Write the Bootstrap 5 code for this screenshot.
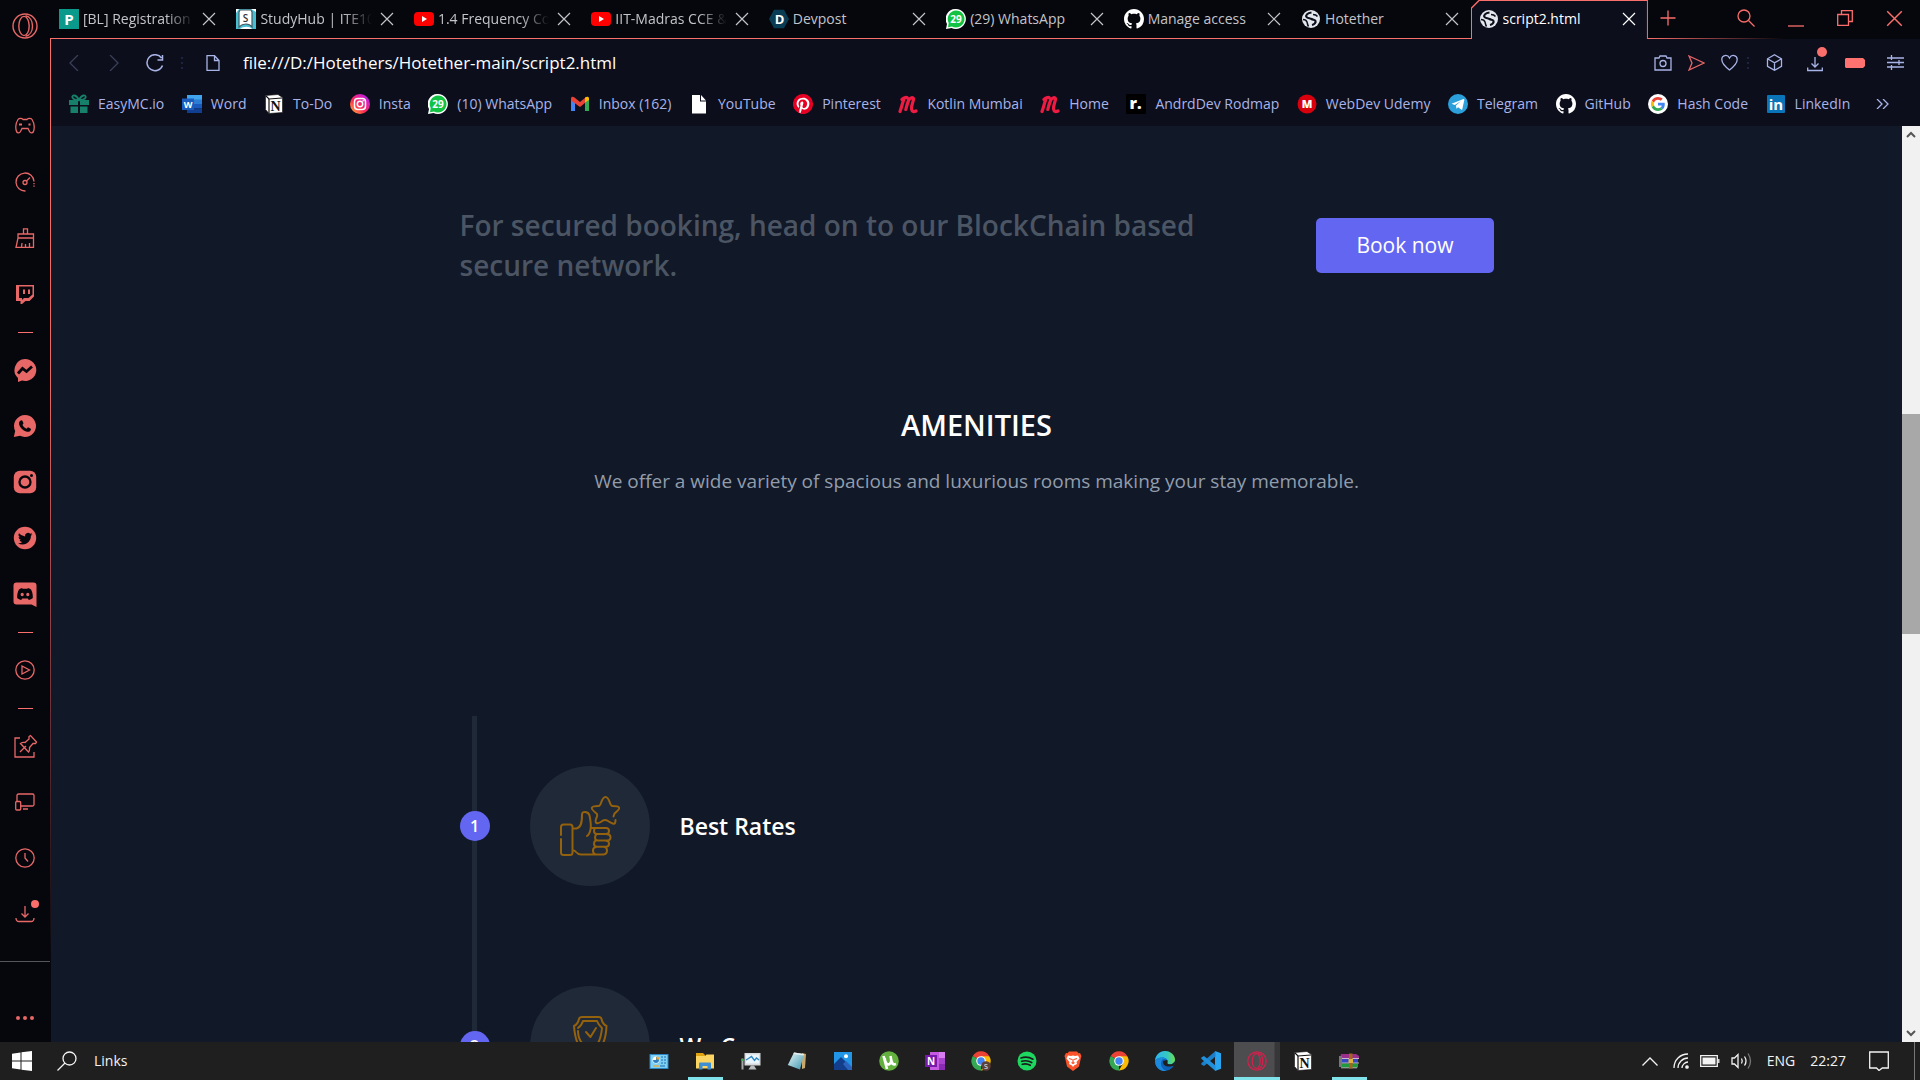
<!DOCTYPE html>
<html lang="en">
<head>
<meta charset="utf-8">
<meta name="viewport" content="width=device-width, initial-scale=1">
<title>script2.html</title>
<link href="https://cdn.jsdelivr.net/npm/bootstrap@5.3.0/dist/css/bootstrap.min.css" rel="stylesheet">
<style>
  :root { --gx: #fa6e6b; --gx-dim: #e86767; --chrome: #0c0e1c; --night: #06070c; --page: #111827; --slate: #1f2937; --indigo: #6366f1; --lilac: #a9b4e6; }
  body { font-family: "Open Sans", "Noto Sans", sans-serif; font-size: 14px; line-height: 20px; background: var(--night); color: #fff; }
  svg { display: block; flex: none; }
  button { background: none; border: 0; padding: 0; color: inherit; }
  a { color: inherit; text-decoration: none; }
  .line-ic { fill: none; stroke: currentColor; stroke-width: 1.3; }
  .i20 { width: 20px; height: 20px; }
  .i24 { width: 24px; height: 24px; }

  /* side rail */
  .rail { width: 50px; color: var(--gx-dim); }
  .rail-logo { height: 98px; padding-top: 13px; }
  .rail-slot { height: 56px; }
  .rail-dash { height: 20px; }
  .rail-dash span { width: 15px; height: 1px; background: var(--gx); }
  .rail-end { height: 81px; border-top: 1px solid #55565c; }
  .rail-edge { width: 1px; margin-top: 38px; background: linear-gradient(var(--gx), var(--gx-dim) 35%, #8a3d45 60%, var(--night) 92%); }
  .dl-dot { position: absolute; width: 8px; height: 8px; border-radius: 50%; background: var(--gx); top: -4px; right: -4px; }
  .dl-dot-lg { width: 10px; height: 10px; top: -7px; }

  /* tab strip */
  .strip { height: 39px; }
  .tab-item { flex: 1 1 0; min-width: 0; height: 39px; padding: 0 12px 0 8px; color: #c3c4c9; border-bottom: 1px solid var(--gx); }
  .tab-name { margin-left: 4px; overflow: hidden; }
  .fade-end { -webkit-mask-image: linear-gradient(90deg, #000 75%, transparent); mask-image: linear-gradient(90deg, #000 75%, transparent); }
  .tab-on { position: relative; z-index: 0; color: #fff; border: 0; padding-bottom: 1px; }
  .tab-on::before, .tab-on::after { content: ""; position: absolute; z-index: -1; inset: 0; background: var(--gx); clip-path: polygon(0 8px, 8px 0, 100% 0, 100% 100%, 0 100%); }
  .tab-on::after { inset: 1px 1px 0 1px; background: var(--chrome); }
  .strip-tools { width: 272px; padding: 0 17px 2px 12px; color: var(--gx); border-bottom: 1px solid; border-image: linear-gradient(90deg, var(--gx), transparent 50%) 1; }
  .win-tools { gap: 33px; }

  /* address row and bookmarks */
  .bars { background: var(--chrome); color: var(--lilac); }
  .addr { height: 48px; padding: 0 16px 1px 15px; }
  .addr-url { background: none; border: 0; outline: 0; color: #fff; font-size: 17px; line-height: 24px; height: 24px; padding: 0; margin-left: 23px; }
  .gap-l { margin-left: 24px; }
  .gap-m { margin-left: 22px; }
  .dim { color: #3a3f58; }
  .marks { height: 39px; padding: 0 31px 6px 18px; }
  .marks a { gap: 9px; white-space: nowrap; }

  /* page */
  .view { background: var(--page); }
  .wrap { width: 100%; max-width: 1034px; }
  .cta-row { padding-top: 79px; }
  .cta-text { font-size: 28px; line-height: 40px; font-weight: 600; color: #4b5563; max-width: 774px; }
  .cta-btn { background: var(--indigo); color: #fff; font-size: 21px; line-height: 35px; padding: 10px 40px; border-radius: 5px; border: 0; }
  .cta-btn:hover { background: #5457e0; color: #fff; }
  .am-title { font-size: 29px; line-height: 40px; font-weight: 600; margin-top: 120px; }
  .am-sub { font-size: 19px; line-height: 32px; color: #929dac; margin-top: 20px; }
  .steps { margin-top: 219px; }
  .step { height: 220px; }
  .step-track { width: 30px; background: linear-gradient(var(--slate), var(--slate)) 12px 0 / 5px 100% no-repeat; }
  .step-num { width: 30px; height: 30px; background: var(--indigo); font-size: 16px; font-weight: 600; }
  .step-disc { width: 120px; height: 120px; margin-left: 40px; background: var(--slate); color: #94610c; }
  .step-name { font-size: 23px; line-height: 32px; font-weight: 600; margin: 0 0 0 30px; }
  .scroller { width: 18px; background: #f1f1f1; color: #555; padding: 5px 0; }
  .scroll-up { flex: 275 0 0; }
  .scroll-thumb { flex: 220 0 0; background: #a8a8a8; }
  .scroll-rest { flex: 395 0 0; }

  /* taskbar */
  .dock { height: 38px; background: #1f1f1f; color: #f3f3f3; }
  .dock-left { width: 636px; padding-left: 12px; }
  .dock-find { margin: 0 17px 0 25px; }
  .dock-app { width: 46px; height: 38px; }
  .dock-open { background: linear-gradient(#80e3ea, #80e3ea) center bottom / 35px 3px no-repeat; }
  .dock-now { color: #d3204c; background: linear-gradient(#80e3ea, #80e3ea) left bottom / 100% 3px no-repeat, linear-gradient(90deg, #4d4d4f 40px, #37373a 41px); }
  .dock-tray { padding-right: 5px; gap: 15px; }
  .dock-tray .near { margin-left: -4px; }
  .peek { width: 1px; height: 38px; background: #777; margin-left: 10px; }
</style>
<script src="https://cdn.jsdelivr.net/npm/bootstrap@5.3.0/dist/js/bootstrap.bundle.min.js"></script>
</head>
<body class="vh-100 overflow-hidden d-flex flex-column">

<svg width="0" height="0" class="position-absolute" aria-hidden="true">
  <defs>
    <linearGradient id="gInsta" x1="0" y1="1" x2="1" y2="0"><stop offset="0" stop-color="#ffc33c"/><stop offset=".4" stop-color="#ff2d50"/><stop offset=".75" stop-color="#d61fc0"/><stop offset="1" stop-color="#6a2cf5"/></linearGradient>
    <linearGradient id="gEdge" x1="0" y1="0" x2="1" y2="0"><stop offset="0" stop-color="#2fb5ea"/><stop offset=".6" stop-color="#35c7c4"/><stop offset="1" stop-color="#6bdf4b"/></linearGradient>
    <linearGradient id="gNote" x1="0" y1="0" x2="1" y2="1"><stop offset="0" stop-color="#e6f7fa"/><stop offset="1" stop-color="#3f97ad"/></linearGradient>
    <symbol id="shut" viewBox="0 0 14 14"><path d="M1 1l12 12M13 1L1 13" fill="none" stroke="currentColor" stroke-width="1.2"/></symbol>
    <symbol id="opera" viewBox="0 0 26 26"><g fill="none" stroke="currentColor" stroke-width="1.4"><circle cx="13" cy="13" r="12"/><ellipse cx="12" cy="13" rx="5.2" ry="9.600"/><path d="M13.500 2.700C18 3.500 20.500 8 20.500 13s-2.500 9.500-7 10.300"/></g></symbol>
    <symbol id="tube" viewBox="0 0 20 20"><rect y="3" width="20" height="14" rx="4" fill="#f00"/><path d="M8 7v6l5-3z" fill="#fff"/></symbol>
    <symbol id="wa29" viewBox="0 0 20 20"><path d="M10 0a10 10 0 1 1-4.500 19L0 20l1-5A10 10 0 0 1 10 0z" fill="#fff"/><path d="M10 1.500a8.500 8.500 0 1 1-4 16L2 18.200 2.700 14A8.500 8.500 0 0 1 10 1.500z" fill="#12c243"/><text x="10" y="14" text-anchor="middle" font-size="10" font-weight="700" fill="#fff">29</text></symbol>
    <symbol id="hub" viewBox="0 0 16 16"><path fill="#fff" d="M8 0C3.580 0 0 3.580 0 8c0 3.540 2.290 6.530 5.470 7.590.4.070.55-.17.55-.38 0-.19-.01-.82-.01-1.490-2.010.37-2.530-.49-2.690-.94-.09-.23-.48-.94-.82-1.130-.28-.15-.68-.52-.01-.53.63-.01 1.080.58 1.230.82.72 1.210 1.870.87 2.330.66.07-.52.28-.87.51-1.070-1.780-.2-3.640-.89-3.640-3.950 0-.87.31-1.590.82-2.150-.08-.2-.36-1.020.08-2.120 0 0 .67-.21 2.200.82.64-.18 1.320-.27 2-.27s1.360.09 2 .27c1.530-1.040 2.200-.82 2.200-.82.44 1.100.16 1.920.08 2.120.51.56.82 1.270.82 2.150 0 3.070-1.870 3.750-3.650 3.950.29.25.54.73.54 1.480 0 1.070-.01 1.930-.01 2.200 0 .21.15.46.55.38A8.010 8.010 0 0 0 16 8c0-4.420-3.580-8-8-8z"/></symbol>
    <symbol id="globe" viewBox="0 0 20 20"><circle cx="10" cy="10" r="9" fill="#e4e7ec"/><path d="M10.500 3.500C6 4 4.500 6.500 5.500 8s3.500 1 5 2 3.500.5 4 2-1 3.500-3.500 4" fill="none" stroke="#0c0e1c" stroke-width="2.200"/><path d="M2 10.500c2 0 3.500 1 4 2.500s.5 3 1.500 4.500M12 5.500c2 0 3.500.5 4.500 2" fill="none" stroke="#0c0e1c" stroke-width="1.500"/></symbol>
    <symbol id="meetm" viewBox="0 0 20 20"><path d="M2 17.500C3.500 13 4.500 9 6 5M7.800 15.500C8.500 12 9.500 9 10.800 6M4 5.500C6 3.500 9 2.500 9.800 4.500M10.500 6.500C12 3.500 15.500 2.500 15.500 5s-2.500 7-2 10 2.500 3 4.500 2" fill="none" stroke="#ee1b42" stroke-width="3.200" stroke-linecap="round"/></symbol>
    <symbol id="note-n" viewBox="0 0 20 20"><path d="M1.500 1.500L14 .5l4.500 3v15L5 19.500l-3.500-4z" fill="#fff" stroke="#111" stroke-width=".6"/><path d="M2 2l3 3 13-1" fill="none" stroke="#111" stroke-width="1.200"/><path d="M5 5v14" stroke="#111" stroke-width="1.200"/><text x="11.500" y="16.500" text-anchor="middle" font-family="Liberation Serif, serif" font-size="14" font-weight="700" fill="#111">N</text></symbol>
    <symbol id="chrome" viewBox="0 0 20 20"><path d="M10 10L1.800 5A9.500 9.500 0 0 1 18.300 5.200z" fill="#ea4335"/><path d="M10 10v9.500A9.500 9.500 0 0 1 1.800 5z" fill="#34a853"/><path d="M10 5.200h8.300A9.500 9.500 0 0 1 9.800 19.500l4.300-7z" fill="#fbbc05"/><circle cx="10" cy="10" r="4.800" fill="#fff"/><circle cx="10" cy="10" r="3.700" fill="#4285f4"/></symbol>
    <symbol id="tray-dl" viewBox="0 0 20 20"><path d="M10 2v11M6.500 9.500L10 13l3.500-3.500M1 14c0 3 1 3.500 3 3.500h12c2 0 3-.5 3-3.500" fill="none" stroke="currentColor" stroke-width="1.300"/></symbol>
    <symbol id="pause-dots" viewBox="0 0 4 14"><path d="M1 1h2v2H1zM1 6h2v2H1zM1 11h2v2H1z" fill="#1c2442"/></symbol>
  </defs>
</svg>

<div class="d-flex flex-grow-1 overflow-hidden">
  <aside class="rail d-flex flex-column flex-shrink-0">
    <div class="rail-logo d-flex justify-content-center"><svg width="26" height="26"><use href="#opera"/></svg></div>
    <button class="rail-slot d-flex align-items-center justify-content-center" aria-label="Games"><svg class="line-ic i20" viewBox="0 0 20 20"><path d="M3 3.500C4 2 7 2 8 3.500h4C13 2 16 2 17 3.500c2 3 2.500 8 1.800 11-.6 3-3.300 3-4.300 1L13 12.500H7l-1.500 3c-1 2-3.700 2-4.300-1C.5 11.500 1 6.500 3 3.500z"/><path d="M4 8.500h3M13.500 8.500h2" stroke-width="2.200"/></svg></button>
    <button class="rail-slot d-flex align-items-center justify-content-center" aria-label="Limiter"><svg class="line-ic i20" viewBox="0 0 20 20"><path d="M10.500 19A9 9 0 1 1 19 9.500"/><circle cx="10" cy="10.500" r="2"/><path d="M11.500 9L15 5.500"/><path d="M19 11v4" stroke-dasharray="1.200 1.400"/></svg></button>
    <button class="rail-slot d-flex align-items-center justify-content-center" aria-label="Cleaner"><svg class="line-ic i20" viewBox="0 0 20 20"><path d="M3 6h15.500v4H3zM3 10L1 19.300h17.500V10M8.500 6V.8h4V6M6.500 19l.5-4M10.500 19v-3M14.500 19v-4"/></svg></button>
    <button class="rail-slot d-flex align-items-center justify-content-center" aria-label="Twitch"><svg class="i20" viewBox="0 0 20 20" fill="currentColor"><path fill-rule="evenodd" d="M1 1h18v11.500L14.500 17H10.500l-3.500 3H5.500v-3H1zM4 2.500V14h3v2l2-2h4.500l4-3.500v-8z"/><path d="M8 5.500h2V10H8zM13 5.500h2V10h-2z"/></svg></button>
    <div class="rail-dash d-flex align-items-center justify-content-center"><span></span></div>
    <button class="rail-slot d-flex align-items-center justify-content-center" aria-label="Messenger"><svg class="i24" viewBox="0 0 24 24"><path fill="currentColor" d="M12 1a11 11 0 1 1-3 21.500L5 24v-4A11 11 0 0 1 12 1z"/><path d="M5 15.500l4.500-5 4 3 5.500-5" fill="none" stroke="#06070c" stroke-width="2.800"/></svg></button>
    <button class="rail-slot d-flex align-items-center justify-content-center" aria-label="WhatsApp"><svg class="i24" viewBox="0 0 24 24"><path fill="currentColor" d="M12 1a11 11 0 1 1-5 20.800L.8 23l1.400-6A11 11 0 0 1 12 1z"/><path fill="#06070c" d="M7 7c1-1 2-1 2.500 0l1 2.300-1 1.700c1 1.700 2.300 3 4 3.800l1.500-1.600 2.500 1.300c.8.500.5 1.500-.3 2.500-1 1-2.500 1-4.200.5-3-1-5.500-3.500-6.700-6.500C5.800 9.500 6 8 7 7z"/></svg></button>
    <button class="rail-slot d-flex align-items-center justify-content-center" aria-label="Instagram"><svg class="i24" viewBox="0 0 24 24"><rect x=".8" y=".8" width="22.400" height="22.400" rx="6" fill="currentColor"/><circle cx="12" cy="12" r="5.500" fill="none" stroke="#06070c" stroke-width="2.300"/><circle cx="18.500" cy="5.500" r="1.500" fill="#06070c"/></svg></button>
    <button class="rail-slot d-flex align-items-center justify-content-center" aria-label="Twitter"><svg class="i24" viewBox="0 0 24 24"><circle cx="12" cy="12" r="11.200" fill="currentColor"/><path transform="translate(5 5) scale(.9)" fill="#06070c" d="M5.026 15c6.038 0 9.341-5.003 9.341-9.334 0-.14 0-.282-.006-.422A6.685 6.685 0 0 0 16 3.542a6.658 6.658 0 0 1-1.889.518 3.301 3.301 0 0 0 1.447-1.817 6.533 6.533 0 0 1-2.087.793A3.286 3.286 0 0 0 7.875 6.030a9.325 9.325 0 0 1-6.767-3.429 3.289 3.289 0 0 0 1.018 4.382A3.323 3.323 0 0 1 .64 6.575v.045a3.288 3.288 0 0 0 2.632 3.218 3.203 3.203 0 0 1-.865.115 3.230 3.230 0 0 1-.614-.057 3.283 3.283 0 0 0 3.067 2.277A6.588 6.588 0 0 1 .78 13.580a6.320 6.320 0 0 1-.78-.045A9.344 9.344 0 0 0 5.026 15z"/></svg></button>
    <button class="rail-slot d-flex align-items-center justify-content-center" aria-label="Discord"><svg class="i24" viewBox="0 0 24 25" style="height:25px"><path fill="currentColor" d="M3.500.5h17a3 3 0 0 1 3 3V25l-5-2.500h-15a3 3 0 0 1-3-3v-16a3 3 0 0 1 3-3z"/><path fill="#06070c" fill-rule="evenodd" d="M6 7.500C8 6 9.500 6 10 6.800h4C14.500 6 16 6 18 7.500c1.500 2.500 2 6 1.800 8.500-1.300 1.200-2.600 1.700-4 2l-1-1.600H9.200L8.200 18c-1.400-.3-2.700-.8-4-2-.2-2.500.3-6 1.800-8.500zm3.200 3.300a1.600 1.700 0 1 0 .01 3.400 1.600 1.700 0 0 0 0-3.400zm5.600 0a1.600 1.700 0 1 0 .01 3.400 1.600 1.700 0 0 0 0-3.400z"/></svg></button>
    <div class="rail-dash d-flex align-items-center justify-content-center"><span></span></div>
    <button class="rail-slot d-flex align-items-center justify-content-center" aria-label="Player"><svg class="line-ic i20" viewBox="0 0 20 20"><circle cx="10" cy="10" r="9.200"/><path d="M7 6l7.500 4L7 14z"/></svg></button>
    <div class="rail-dash d-flex align-items-center justify-content-center"><span></span></div>
    <button class="rail-slot d-flex align-items-center justify-content-center" aria-label="Pinboards"><svg class="line-ic i24" viewBox="0 0 24 24"><path d="M7 4H2v19h19v-5M7 18l6-6M7.500 9.500c2-1.500 3.500-1 4.500-1l4-3.500v-2.500l1.500-1L23.500 8l-1 1.500H20l-3.500 4c0 1.500.5 3-1 4.500z"/></svg></button>
    <button class="rail-slot d-flex align-items-center justify-content-center" aria-label="My Flow"><svg class="line-ic i20" viewBox="0 0 20 20"><path d="M2 10V3.500q0-1.500 1.500-1.500h14q1.500 0 1.500 1.500v9q0 1.500-1.500 1.500H6M8 17h5"/><rect x=".7" y="9.500" width="5" height="8.500" rx="1"/></svg></button>
    <button class="rail-slot d-flex align-items-center justify-content-center" aria-label="History"><svg class="line-ic i20" viewBox="0 0 20 20"><circle cx="10" cy="10" r="9.200"/><path d="M10 5v5l3 3.500"/></svg></button>
    <button class="rail-slot d-flex align-items-center justify-content-center" aria-label="Downloads"><span class="position-relative"><svg class="i20"><use href="#tray-dl"/></svg><span class="dl-dot"></span></span></button>
    <div class="rail-end mt-auto w-100 d-flex align-items-center justify-content-center"><button aria-label="Sidebar setup"><svg width="20" height="40" viewBox="0 0 20 40" fill="currentColor"><circle cx="3" cy="36" r="2"/><circle cx="10" cy="36" r="2"/><circle cx="17" cy="36" r="2"/></svg></button></div>
  </aside>
  <div class="rail-edge flex-shrink-0"></div>

  <div class="d-flex flex-column flex-grow-1 overflow-hidden">
    <header class="strip d-flex flex-shrink-0">
      <div class="tab-item d-flex align-items-center"><svg class="i20" viewBox="0 0 20 20"><path d="M0 0h20v20H0z" fill="#0a9a8c"/><text x="10" y="15.500" text-anchor="middle" font-size="15" font-weight="700" fill="#fff">P</text></svg><span class="tab-name fade-end flex-grow-1 text-nowrap">[BL] Registration</span><button class="ms-2" aria-label="Close tab"><svg width="14" height="14"><use href="#shut"/></svg></button></div>
      <div class="tab-item d-flex align-items-center"><svg class="i20" viewBox="0 0 20 20"><path d="M0 0h20v20H0z" fill="#fff"/><path d="M0 4l3-4h12l5 3v17h-4c-2-3-9-3-12 0H0z" fill="#45bfd2"/><path d="M4 1h11l1 2v15c-3-4-9-4-13 0V3z" fill="#fff" stroke="#4b5a63" stroke-width="1.200"/><text x="9.500" y="12.500" text-anchor="middle" font-size="10" font-weight="600" fill="#333">S</text></svg><span class="tab-name fade-end flex-grow-1 text-nowrap">StudyHub | ITE10</span><button class="ms-2" aria-label="Close tab"><svg width="14" height="14"><use href="#shut"/></svg></button></div>
      <div class="tab-item d-flex align-items-center"><svg class="i20"><use href="#tube"/></svg><span class="tab-name fade-end flex-grow-1 text-nowrap">1.4 Frequency Co</span><button class="ms-2" aria-label="Close tab"><svg width="14" height="14"><use href="#shut"/></svg></button></div>
      <div class="tab-item d-flex align-items-center"><svg class="i20"><use href="#tube"/></svg><span class="tab-name fade-end flex-grow-1 text-nowrap">IIT-Madras CCE &amp;</span><button class="ms-2" aria-label="Close tab"><svg width="14" height="14"><use href="#shut"/></svg></button></div>
      <div class="tab-item d-flex align-items-center"><svg class="i20" viewBox="0 0 20 20"><path d="M5 .8h10l5 9.200-5 9.200H5L0 10z" fill="#083c55"/><text x="10.500" y="14.500" text-anchor="middle" font-size="13" font-weight="700" fill="#fff">D</text></svg><span class="tab-name flex-grow-1 text-nowrap">Devpost</span><button class="ms-2" aria-label="Close tab"><svg width="14" height="14"><use href="#shut"/></svg></button></div>
      <div class="tab-item d-flex align-items-center"><svg class="i20"><use href="#wa29"/></svg><span class="tab-name flex-grow-1 text-nowrap">(29) WhatsApp</span><button class="ms-2" aria-label="Close tab"><svg width="14" height="14"><use href="#shut"/></svg></button></div>
      <div class="tab-item d-flex align-items-center"><svg class="i20"><use href="#hub"/></svg><span class="tab-name flex-grow-1 text-nowrap">Manage access</span><button class="ms-2" aria-label="Close tab"><svg width="14" height="14"><use href="#shut"/></svg></button></div>
      <div class="tab-item d-flex align-items-center"><svg class="i20"><use href="#globe"/></svg><span class="tab-name flex-grow-1 text-nowrap">Hotether</span><button class="ms-2" aria-label="Close tab"><svg width="14" height="14"><use href="#shut"/></svg></button></div>
      <div class="tab-item tab-on d-flex align-items-center"><svg class="i20"><use href="#globe"/></svg><span class="tab-name flex-grow-1 text-nowrap">script2.html</span><button class="ms-2" aria-label="Close tab"><svg width="14" height="14"><use href="#shut"/></svg></button></div>
      <div class="strip-tools d-flex align-items-center flex-shrink-0">
        <button class="me-auto" aria-label="New tab"><svg class="line-ic" width="16" height="16" viewBox="0 0 16 16"><path d="M8 .5v15M.5 8h15"/></svg></button>
        <div class="win-tools d-flex align-items-center">
          <button aria-label="Search tabs"><svg class="line-ic" width="18" height="18" viewBox="0 0 18 18"><circle cx="7" cy="7" r="6"/><path d="M11.500 11.500L17.500 17.500"/></svg></button>
          <button aria-label="Minimise"><svg class="line-ic" width="16" height="18" viewBox="0 0 16 18"><path d="M0 17h16"/></svg></button>
          <button aria-label="Restore"><svg class="line-ic" width="16" height="16" viewBox="0 0 16 16"><path d="M.7 4.500h10.800v10.800H.7zM4.500 4.500V.7h10.800v10.800h-3.500"/></svg></button>
          <button aria-label="Close window"><svg width="17" height="17"><use href="#shut"/></svg></button>
        </div>
      </div>
    </header>

    <div class="bars flex-shrink-0">
      <div class="addr d-flex align-items-center">
        <button class="dim" aria-label="Back"><svg class="line-ic" width="16" height="16" viewBox="0 0 16 16"><path d="M12 0L4 8l8 8"/></svg></button>
        <button class="dim gap-l" aria-label="Forward"><svg class="line-ic" width="16" height="16" viewBox="0 0 16 16"><path d="M4 0l8 8-8 8"/></svg></button>
        <button class="gap-l" aria-label="Reload"><svg class="line-ic" width="18" height="18" viewBox="0 0 18 18"><path d="M16.500 11.500A8 8 0 1 1 15.500 4M16.500 1v5h-5" stroke-width="1.500"/></svg></button>
        <svg class="ms-3" width="4" height="14"><use href="#pause-dots"/></svg>
        <svg class="line-ic gap-m" width="14" height="16" viewBox="0 0 14 16"><path d="M1 .7h7.500L13 5.500v9.800H1zM8.500.7v4.800H13"/></svg>
        <input class="addr-url flex-grow-1" type="text" aria-label="Address" value="file:///D:/Hotethers/Hotether-main/script2.html">
        <div class="d-flex align-items-center">
          <button aria-label="Snapshot"><svg class="line-ic" width="18" height="16" viewBox="0 0 18 16"><path d="M1 3h4l1-2h6l1 2h4v12H1z"/><circle cx="9" cy="8.500" r="3"/></svg></button>
          <button class="ms-3" aria-label="Send to Flow"><svg class="line-ic" style="color:#e86767" width="17" height="16" viewBox="0 0 17 16"><path d="M1 1l15 7L1 15l3-7z"/></svg></button>
          <button class="ms-3" aria-label="Save bookmark"><svg class="line-ic" width="17" height="17" viewBox="0 0 17 17"><path d="M8.500 16C4 12.500.8 9 .8 5.500.8 1 6.500 0 8.500 4c2-4 7.700-3 7.700 1.500 0 3.500-3.200 7-7.700 10.500z"/></svg></button>
          <svg class="ms-2" width="4" height="14"><use href="#pause-dots"/></svg>
          <button class="ms-3" aria-label="Extensions"><svg class="line-ic" width="17" height="17" viewBox="0 0 17 17"><path d="M8.500.8l7 4v7.500l-7 4-7-4V4.800zM1.500 4.800l7 4 7-4M8.500 8.800v7.500"/></svg></button>
          <button class="position-relative gap-l" aria-label="Downloads"><svg width="16" height="18" viewBox="0 0 16 18" class="line-ic"><path d="M8 3v10M4.500 9.500L8 13l3.500-3.500M.7 13.500v3h14.600v-3"/></svg><span class="dl-dot dl-dot-lg"></span></button>
          <svg class="gap-m" width="20" height="10" viewBox="0 0 20 10"><path d="M1 0h17l2 2v6l-2 2H1L0 9V1z" fill="#ff7270"/></svg>
          <button class="gap-m" aria-label="Easy setup"><svg class="line-ic" width="17" height="15" viewBox="0 0 17 15"><path d="M0 3h17M0 7.500h17M0 12h17M4.500 0v5M12 5v5M4.500 10v5"/></svg></button>
        </div>
      </div>

      <nav class="marks d-flex align-items-center justify-content-between" aria-label="Bookmarks">
        <a class="d-flex align-items-center" href="#"><svg class="i20" viewBox="0 0 20 20"><path d="M0 6h9v5H0zM11 6h9v5h-9zM1.500 12.500H9V19H1.500zM11 12.500h7.500V19H11z" fill="#16806a"/><path d="M10 6C2 6 2 1 5.500 1.500 8 2 9 4 10 6c1-2 2-4 4.500-4.500C18 1 18 6 10 6z" fill="none" stroke="#16806a" stroke-width="1.800"/></svg>EasyMC.io</a>
        <a class="d-flex align-items-center" href="#"><svg class="i20" viewBox="0 0 20 20"><path d="M5 1h15v5H5z" fill="#41a5ee"/><path d="M5 5.500h15V10H5z" fill="#2b7cd3"/><path d="M5 10h15v4.500H5z" fill="#185abd"/><path d="M5 14.500h15V19H5z" fill="#103f91"/><path d="M0 4.500h12v11.500H0z" fill="#1b5dbe"/><text x="6" y="13.500" text-anchor="middle" font-size="9" font-weight="700" fill="#fff">W</text></svg>Word</a>
        <a class="d-flex align-items-center" href="#"><svg class="i20"><use href="#note-n"/></svg>To-Do</a>
        <a class="d-flex align-items-center" href="#"><svg class="i20" viewBox="0 0 20 20"><circle cx="10" cy="10" r="10" fill="url(#gInsta)"/><rect x="4.500" y="4.500" width="11" height="11" rx="3.200" fill="none" stroke="#fff" stroke-width="1.500"/><circle cx="10" cy="10" r="2.700" fill="none" stroke="#fff" stroke-width="1.500"/><circle cx="13.200" cy="6.800" r=".8" fill="#fff"/></svg>Insta</a>
        <a class="d-flex align-items-center" href="#"><svg class="i20"><use href="#wa29"/></svg>(10) WhatsApp</a>
        <a class="d-flex align-items-center" href="#"><svg class="i20" viewBox="0 0 20 20"><path d="M1 5v12h4V8z" fill="#4285f4"/><path d="M19 5v12h-4V8z" fill="#34a853"/><path d="M1 4.500C1 2.500 3 2.500 4.500 3.500L10 8l5.500-4.500v5L10 13 1 6.500z" fill="#ea4335"/><path d="M15 8.500v-5c2-1.500 4-1 4 1v1.500z" fill="#fbbc05"/></svg>Inbox (162)</a>
        <a class="d-flex align-items-center" href="#"><svg class="i20" viewBox="0 0 20 20"><path d="M3 1h8v6.500h6V19.500H3zM12 1l5 5.500h-5z" fill="#fff"/></svg>YouTube</a>
        <a class="d-flex align-items-center" href="#"><svg class="i20" viewBox="0 0 16 16"><circle cx="8" cy="8" r="7.500" fill="#fff"/><path fill="#e60023" d="M8 0a8 8 0 0 0-2.915 15.452c-.07-.633-.134-1.606.027-2.297.146-.625.938-3.977.938-3.977s-.239-.479-.239-1.187c0-1.113.645-1.943 1.448-1.943.682 0 1.012.512 1.012 1.127 0 .686-.437 1.712-.663 2.663-.188.796.4 1.446 1.185 1.446 1.422 0 2.515-1.500 2.515-3.664 0-1.915-1.377-3.254-3.342-3.254-2.276 0-3.612 1.707-3.612 3.471 0 .688.265 1.425.595 1.826a.24.24 0 0 1 .056.23c-.061.252-.196.796-.222.907-.035.146-.116.177-.268.107-1-.465-1.624-1.926-1.624-3.100 0-2.523 1.834-4.840 5.286-4.840 2.775 0 4.932 1.977 4.932 4.620 0 2.757-1.739 4.976-4.151 4.976-.811 0-1.573-.421-1.834-.919l-.498 1.902c-.181.695-.669 1.566-.995 2.097A8 8 0 1 0 8 0z"/></svg>Pinterest</a>
        <a class="d-flex align-items-center" href="#"><svg class="i20"><use href="#meetm"/></svg>Kotlin Mumbai</a>
        <a class="d-flex align-items-center" href="#"><svg class="i20"><use href="#meetm"/></svg>Home</a>
        <a class="d-flex align-items-center" href="#"><svg class="i20" viewBox="0 0 20 20"><rect width="20" height="20" rx="1" fill="#000"/><text x="9.500" y="15" text-anchor="middle" font-size="16" font-weight="800" fill="#fff">r.</text></svg>AndrdDev Rodmap</a>
        <a class="d-flex align-items-center" href="#"><svg class="i20" viewBox="0 0 20 20"><circle cx="10" cy="10" r="9.500" fill="#d9000d"/><text x="10" y="14" text-anchor="middle" font-size="11" font-weight="800" fill="#fff">M</text></svg>WebDev Udemy</a>
        <a class="d-flex align-items-center" href="#"><svg class="i20" viewBox="0 0 20 20"><circle cx="10" cy="10" r="10" fill="#2ba0db"/><path d="M3.500 9.800L15.500 5c.7-.2 1 .2.800 1l-2 9.200c-.2.700-.7.800-1.200.4l-3-2.300-1.700 1.500-.4-3.300 5-4.500-6.200 4z" fill="#fff"/></svg>Telegram</a>
        <a class="d-flex align-items-center" href="#"><svg class="i20"><use href="#hub"/></svg>GitHub</a>
        <a class="d-flex align-items-center" href="#"><svg class="i20" viewBox="-10 -10 68 68"><circle cx="24" cy="24" r="34" fill="#fff"/><path fill="#EA4335" d="M24 9.500c3.540 0 6.710 1.220 9.210 3.600l6.850-6.850C35.900 2.380 30.470 0 24 0 14.620 0 6.510 5.380 2.560 13.220l7.980 6.190C12.430 13.720 17.740 9.500 24 9.500z"/><path fill="#4285F4" d="M46.980 24.550c0-1.570-.15-3.090-.38-4.550H24v9.020h12.940c-.58 2.960-2.260 5.480-4.780 7.180l7.730 6c4.510-4.180 7.090-10.360 7.090-17.650z"/><path fill="#FBBC05" d="M10.530 28.590c-.48-1.450-.76-2.990-.76-4.590s.27-3.140.76-4.590l-7.980-6.190C.92 16.460 0 20.120 0 24c0 3.880.92 7.540 2.560 10.780l7.970-6.190z"/><path fill="#34A853" d="M24 48c6.480 0 11.930-2.130 15.890-5.810l-7.730-6c-2.150 1.450-4.920 2.300-8.160 2.300-6.260 0-11.570-4.220-13.470-9.910l-7.980 6.190C6.510 42.620 14.620 48 24 48z"/></svg>Hash Code</a>
        <a class="d-flex align-items-center" href="#"><svg class="i20" viewBox="0 0 20 20"><rect x="1" y="1" width="18" height="18" rx="1" fill="#0a74b8"/><text x="10" y="16" text-anchor="middle" font-size="15" font-weight="700" fill="#fff">in</text></svg>LinkedIn</a>
        <button class="ms-2" aria-label="More bookmarks"><svg class="line-ic" width="13" height="10" viewBox="0 0 13 10"><path d="M1 0l5 5-5 5M7 0l5 5-5 5"/></svg></button>
      </nav>
    </div>

    <div class="d-flex flex-grow-1 overflow-hidden">
      <main class="view flex-grow-1 overflow-hidden">
        <div class="wrap mx-auto">
          <section class="cta-row d-flex align-items-center justify-content-between">
            <h1 class="cta-text mb-0">For secured booking, head on to our BlockChain based secure network.</h1>
            <button class="cta-btn" type="button">Book now</button>
          </section>
          <section class="text-center">
            <h2 class="am-title mb-0">AMENITIES</h2>
            <p class="am-sub mb-0">We offer a wide variety of spacious and luxurious rooms making your stay memorable.</p>
          </section>
          <section class="steps">
            <div class="step d-flex align-items-center">
              <div class="step-track h-100 d-flex align-items-center"><span class="step-num rounded-circle d-flex align-items-center justify-content-center">1</span></div>
              <div class="step-disc rounded-circle d-flex align-items-center justify-content-center">
                <svg width="60" height="60" viewBox="0 0 60 60" fill="none" stroke="currentColor" stroke-width="2" stroke-linecap="round" stroke-linejoin="round"><path d="M1 39V31q0-2.500 2.500-2.500H10q2.500 0 2.500 2.500v25.500q0 2.500-2.500 2.500H3.500Q1 59 1 56.500V43"/><path d="M13 32.500h3.500c5-1 5.500-7 5.500-14 0-4 6.500-3 7.500 1 1 5 2 9 1 14q-1 5-3.500 6.500"/><path d="M31 32h15q3 0 3 3t-3 3H37q-3 0-3-3 0-2 1.500-3M47 38.300q3.500 0 3.500 3.200T47 44.500H38q-3 0-3-3 0-2 1.500-3M46 44.700q3 0 3 3t-3 3H37q-3 0-3-3 0-2 1.500-3M44.500 51q2.500.5 2.500 3.500 0 3.500-3.500 4H21q-3 0-5-2.500-1-1.500-3-1.500M35 58q-2-.5-2-3.500 0-3 3-3.500"/><path d="M53.500 20.500l1-3q5-4 4.700-5.500-.2-2-6.700-2-1.500 0-2.500-3-2-6-4.500-6T41 7q-1 3-2.500 3-6.500 0-6.700 2-.2 1.500 4.700 5.500 1 1 .500 3-2.500 5.500-.5 6.500t6.500-2.500q2.500-1 5 .5 6 4 7 2 .5-1 .5-3"/></svg>
              </div>
              <h3 class="step-name">Best Rates</h3>
            </div>
            <div class="step d-flex align-items-center">
              <div class="step-track h-100 d-flex align-items-center"><span class="step-num rounded-circle d-flex align-items-center justify-content-center">2</span></div>
              <div class="step-disc rounded-circle d-flex align-items-center justify-content-center">
                <svg width="60" height="60" viewBox="0 0 60 60" fill="none" stroke="currentColor" stroke-width="2" stroke-linecap="round" stroke-linejoin="round"><path d="M22 1h17q2 0 2.500 2 1 5 5 7-.5 13-5 20T30 40Q23 37 19 30T14 10q4-2 5-7 .5-2 3-2z"/><path d="M23 5h14q1.500 4 5 7-1 10-4 15M18 12q4-3 5-7M18 15q0 7 4 12M26 16l4.500 5L36 12"/></svg>
              </div>
              <h3 class="step-name">We Care</h3>
            </div>
          </section>
        </div>
      </main>
      <div class="scroller d-flex flex-column align-items-center flex-shrink-0">
        <svg width="10" height="8" viewBox="0 0 10 8"><path d="M1 6l4-4 4 4" fill="none" stroke="currentColor" stroke-width="2"/></svg>
        <span class="scroll-up"></span><span class="scroll-thumb w-100"></span><span class="scroll-rest"></span>
        <svg width="10" height="8" viewBox="0 0 10 8"><path d="M1 2l4 4 4-4" fill="none" stroke="currentColor" stroke-width="2"/></svg>
      </div>
    </div>
  </div>
</div>

<footer class="dock d-flex align-items-center flex-shrink-0">
  <div class="dock-left d-flex align-items-center">
    <button aria-label="Start"><svg class="i20" viewBox="0 0 20 20"><path d="M0 2.800L8.500 1.500v8H0zM9.500 1.300L20 0v9.500H9.500zM0 10.500h8.500v8L0 17.200zM9.500 10.500H20V20L9.500 18.700z" fill="#fff"/></svg></button>
    <button class="dock-find" aria-label="Search"><svg class="line-ic i20" viewBox="0 0 20 20"><circle cx="12.500" cy="7.500" r="6.500"/><path d="M8 12L.5 19.500"/></svg></button>
    <span>Links</span>
  </div>
  <button class="dock-app d-flex align-items-center justify-content-center" aria-label="Control Panel"><svg class="i20" viewBox="0 0 20 20"><rect x="1" y="3.500" width="18" height="14" fill="#7fd0f5" stroke="#2c86c4"/><circle cx="7" cy="9" r="3.500" fill="#fff"/><path d="M7 9V6a3 3 0 1 1-3 3z" fill="#2f7fc4"/><path d="M7.500 8.500v-3a3 3 0 0 1 2.800 3z" fill="#f5a623"/><path d="M12 6h2M12 9h2M12 12h2M15 6h2M15 9h2M15 12h2" stroke="#1b6fae"/><path d="M4 15h6" stroke="#f5a623" stroke-width="1.200"/><path d="M11 15h5" stroke="#1b6fae"/></svg></button>
  <button class="dock-app dock-open d-flex align-items-center justify-content-center" aria-label="File Explorer"><svg class="i20" viewBox="0 0 20 20"><path d="M1 2h7l2 2v4H1z" fill="#e2a310"/><path d="M1 5h9l1.500-1.500H19v14H1z" fill="#fcd462"/><path d="M4 18.500v-6q0-1 1-1h10q1 0 1 1v6h-3.500V15h-5v3.500z" fill="#3d8fd1"/></svg></button>
  <button class="dock-app d-flex align-items-center justify-content-center" aria-label="Resource Monitor"><svg class="i20" viewBox="0 0 20 20"><rect x="3.500" y="2" width="16" height="12.500" fill="#d6d8da"/><path d="M5 3.500h13v9H5z" fill="#eaf5fc"/><path d="M5 9l2.500-1.500 3-2 3 4 2-2.500L18 9" fill="none" stroke="#2a86c2" stroke-width="1.300"/><path d="M10 14.500h3l2.500 4h-8z" fill="#b9bcbf"/><path d="M.5 7.500h2v11h-2z" fill="#a5a8ab"/><path d="M.5 8h2v2h-2z" fill="#3bb54a"/></svg></button>
  <button class="dock-app d-flex align-items-center justify-content-center" aria-label="Notepad"><svg class="i20" viewBox="0 0 20 20"><path d="M15 2l4 1-1 14-3 1z" fill="#c8a86c"/><path d="M7 1.500L17 3l-4 15.500L.8 14z" fill="url(#gNote)"/><path d="M7 1.500L17 3l-.5 1.500-10-1.500z" fill="#e8eef0"/></svg></button>
  <button class="dock-app d-flex align-items-center justify-content-center" aria-label="Photos"><svg class="i20" viewBox="0 0 20 20"><path d="M1 1h18v18H1z" fill="#2196e6"/><path d="M1 13l7-7 11 11v2H1z" fill="#123e8c"/><path d="M10 13l3-3 6 6v3h-4z" fill="#2b63bd"/><circle cx="13" cy="5.200" r="2" fill="#fff"/></svg></button>
  <button class="dock-app d-flex align-items-center justify-content-center" aria-label="uTorrent"><svg class="i20" viewBox="0 0 20 20"><circle cx="10" cy="10" r="9.800" fill="#63b03f"/><path d="M4.500 5l3.500 13M5.500 7c1 6 3 7 5 6s2-4 1-8M12 8c1 5 2 6 5 5" fill="none" stroke="#fff" stroke-width="2.600"/></svg></button>
  <button class="dock-app d-flex align-items-center justify-content-center" aria-label="OneNote"><svg class="i20" viewBox="0 0 20 20"><path d="M5 1h15v18H5z" fill="#c45be0"/><path d="M14 1h6v6h-6z" fill="#d77df0"/><path d="M14 7h6v6h-6z" fill="#a743cc"/><path d="M14 13h6v6h-6z" fill="#8a2bb3"/><path d="M0 4h12v12H0z" fill="#7719aa"/><text x="6" y="13.800" text-anchor="middle" font-size="10" font-weight="700" fill="#fff">N</text></svg></button>
  <button class="dock-app d-flex align-items-center justify-content-center" aria-label="Chrome, S profile"><svg class="i20" viewBox="0 0 20 20"><use href="#chrome" width="20" height="20"/><circle cx="15" cy="15" r="4.800" fill="#5d4037"/><text x="15" y="17.500" text-anchor="middle" font-size="7" fill="#fff">S</text></svg></button>
  <button class="dock-app d-flex align-items-center justify-content-center" aria-label="Spotify"><svg class="i20" viewBox="0 0 20 20"><circle cx="10" cy="10" r="9.500" fill="#1ed760"/><path d="M4 7c4-1.300 8.500-.8 12 1.200M4.700 10.300c3.500-1 7-.6 10 1.200M5.300 13.300c3-.8 5.500-.5 8 1" fill="none" stroke="#1a1a1a" stroke-width="1.700" stroke-linecap="round"/></svg></button>
  <button class="dock-app d-flex align-items-center justify-content-center" aria-label="Brave"><svg class="i20" viewBox="0 0 20 20"><path d="M6 .5h8l1.500 1.700 1.500-.2L18.500 5l-.5 1.500-2 9L10 20l-6-4.500-2-9L1.500 5 3 2l1.500.2z" fill="#fb542b"/><path d="M5 4.500l3 .5 2-.5 2 .5 3-.5 1.500 3-3 3.500.5 2-3 1.500-1 1.500-1-1.500-3-1.500.5-2-3-3.500z" fill="#fff"/><path d="M6 7.500l3 1M14 7.500l-3 1M8.500 11.500L10 12.500l1.500-1M10 8v4" stroke="#fb542b" stroke-width="1.200" fill="none"/></svg></button>
  <button class="dock-app d-flex align-items-center justify-content-center" aria-label="Chrome"><svg class="i20"><use href="#chrome"/></svg></button>
  <button class="dock-app d-flex align-items-center justify-content-center" aria-label="Edge"><svg class="i20" viewBox="0 0 20 20"><circle cx="10" cy="10" r="10" fill="#0d62b8"/><path d="M0 9.500C.5 4 5 0 10 0c6 0 10 4.500 10 8.500 0 3-2.200 4.800-5 4.800-2 0-3.200-.8-2.600-1.800C13.500 9 11 6.500 7.500 6.500 4 6.500 1 8 0 9.500z" fill="url(#gEdge)"/><path d="M7.500 8.500c-3 3.500-1.500 9.500 4 11.400C5 21 0 16 0 10c1-2 4-3.500 7.500-3.500 2 0 4 1.200 4.300 2.800-1.300-1.300-3-1.800-4.300-.8z" fill="#1b8ade"/><path d="M8 10c-.5 4 3.500 6.800 9.500 5 1-.3 1.300.2.800.8A10 10 0 0 0 20 12l-.5-1.500c-1 2-3 2.800-4.500 2.800-2 0-3.200-.8-2.600-1.800.4-1 .2-2-.4-2.600z" fill="#1f1f1f"/></svg></button>
  <button class="dock-app d-flex align-items-center justify-content-center" aria-label="VS Code"><svg class="i20" viewBox="0 0 20 20"><path d="M14 0l6 2.300v15.400L14 20z" fill="#2aa5f0"/><path d="M14.500 0v5.500L3 15 .3 13.500v-1.300z" fill="#1b7fcb"/><path d="M14.500 20v-5.500L3 5 .3 6.500v1.300z" fill="#2090dc"/></svg></button>
  <button class="dock-app dock-now d-flex align-items-center justify-content-center" aria-label="Opera GX"><svg class="i20" viewBox="0 0 26 26" fill="none" stroke="currentColor" stroke-width="1.600"><circle cx="13" cy="13" r="12"/><ellipse cx="12" cy="13" rx="5.200" ry="9.600"/><path d="M13.500 2.700C18 3.500 20.500 8 20.500 13s-2.500 9.500-7 10.300"/></svg></button>
  <button class="dock-app d-flex align-items-center justify-content-center" aria-label="Notion"><svg class="i20"><use href="#note-n"/></svg></button>
  <button class="dock-app dock-open d-flex align-items-center justify-content-center" aria-label="WinRAR"><svg class="i20" viewBox="0 0 20 20"><path d="M2 3h15l3 2v3H1z" fill="#9b2f8c"/><path d="M1 8h18v4H1z" fill="#3548c4"/><path d="M1 12.500h18v4H3z" fill="#1f9a3f"/><path d="M0 7.500h20M0 12h20M2 16.800h16" stroke="#d9d9d9" stroke-width=".8"/><path d="M10 2.500h3.500v15H10z" fill="#a5651d"/><path d="M9.500 8h4.500v4H9.500z" fill="#e0b040"/><path d="M0 5h3v11H0z" fill="#777"/></svg></button>
  <div class="dock-tray d-flex align-items-center ms-auto">
    <button aria-label="Hidden icons"><svg class="line-ic" width="16" height="9" viewBox="0 0 16 9"><path d="M.5 8.500L8 1l7.500 7.500"/></svg></button>
    <svg class="line-ic" width="16" height="16" viewBox="0 0 16 16"><path d="M1 15C1 7 7 1 15 1M5 15C5 9.500 9.500 5 15 5M9 15c0-3 3-6 6-6"/><circle cx="14" cy="14" r="1.200" fill="currentColor"/></svg>
    <svg class="line-ic near" width="20" height="12" viewBox="0 0 20 12"><path d="M.7.7h16.600v10.600H.7z"/><path d="M2.500 2.500h13v7h-13z" fill="currentColor" stroke="none"/><path d="M18.800 4v4"/></svg>
    <svg class="line-ic near" width="21" height="18" viewBox="0 0 21 18"><path d="M1 6h2.500L7 2.500v13L3.500 12H1zM10.500 6.500q1.500 2.500 0 5M13.500 4.500q3 4.500 0 9"/><path d="M17 1.500q5 7.500 0 15" stroke="#777"/></svg>
    <span>ENG</span>
    <span>22:27</span>
    <button class="ms-2" aria-label="Notifications"><svg class="line-ic" width="20" height="20" viewBox="0 0 20 20"><path d="M.7 1h18.600v16h-6L10 19.500 7.500 17H.7z"/></svg></button>
    <span class="peek"></span>
  </div>
</footer>
</body>
</html>
